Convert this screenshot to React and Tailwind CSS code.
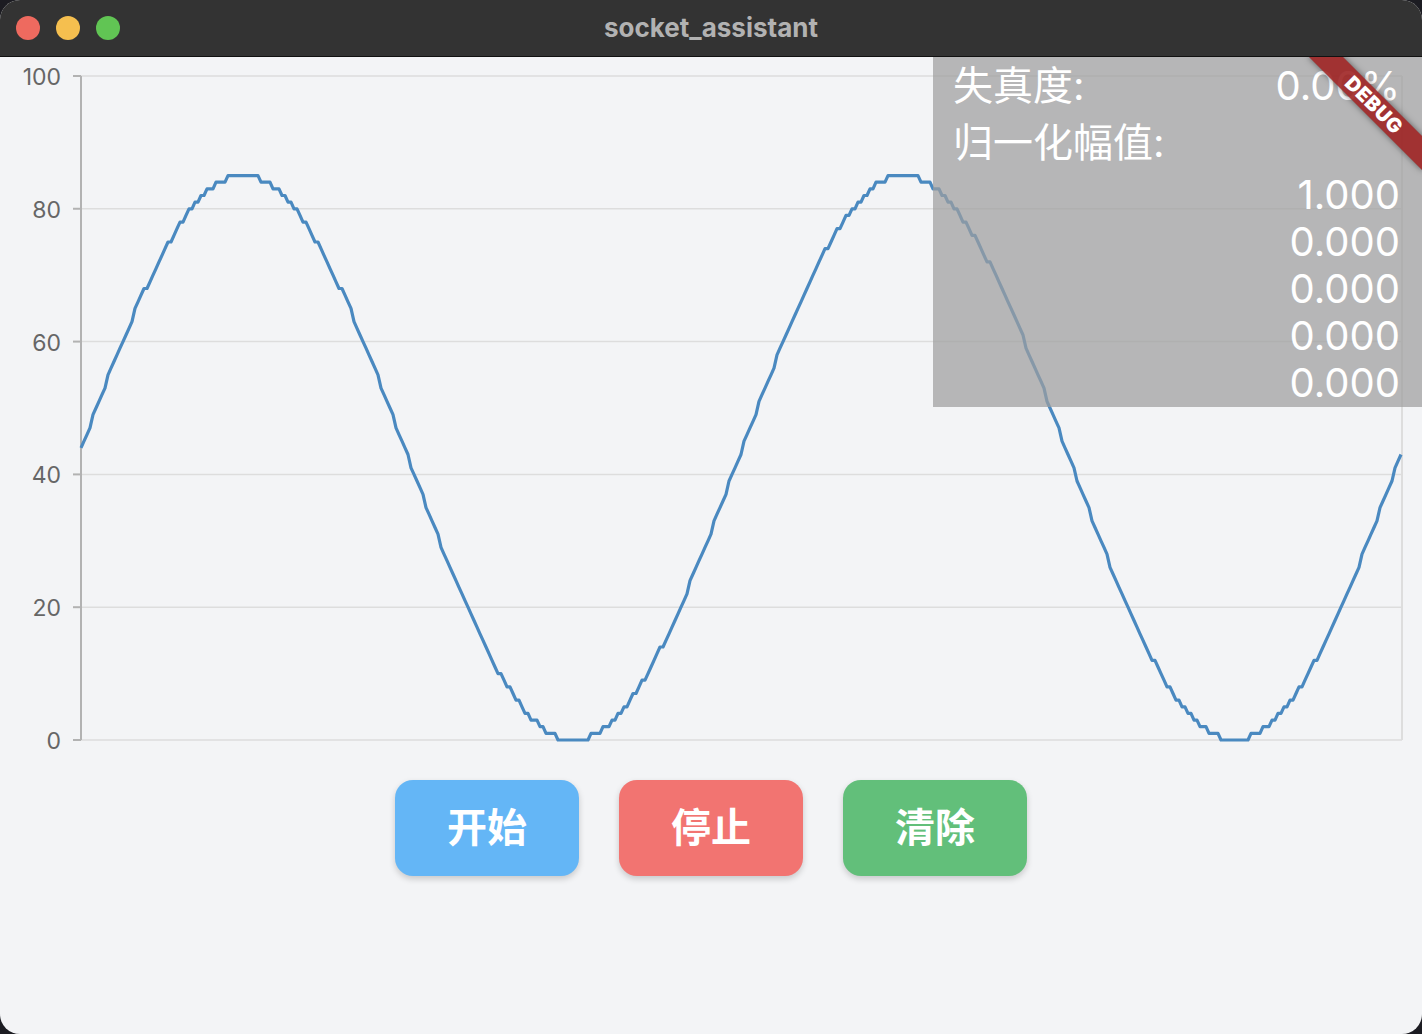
import React from "react";

const FONT = { fontFamily: 'Inter, "Noto Sans CJK SC", sans-serif' };

// chart geometry (content-area coordinates)
const LEFT = 81;
const RIGHT = 1402;
const TOP = 19;
const BOTTOM = 683;
const PX_PER_UNIT = (BOTTOM - TOP) / 100;

function buildWave() {
  const pts = [];
  for (let x = LEFT; x <= RIGHT; x += 3) {
    const v = Math.round(42.5 + 42.5 * Math.cos((2 * Math.PI * (x - 243)) / 661));
    const y = TOP + (100 - v) * PX_PER_UNIT;
    pts.push(`${x},${y.toFixed(1)}`);
  }
  return pts.join(" ");
}

function WaveChart() {
  const ticks = [0, 20, 40, 60, 80, 100];
  return (
    <svg width="1422" height="703" className="block">
      {ticks.map((t) => {
        const y = TOP + (100 - t) * PX_PER_UNIT;
        return (
          <g key={t}>
            <line x1={LEFT} x2={RIGHT} y1={y} y2={y} stroke="#dddddd" strokeWidth="1.5" />
            <line x1={73} x2={LEFT} y1={y} y2={y} stroke="#b2b2b2" strokeWidth="2" />
            <text
              x="61"
              y={y + 1}
              textAnchor="end"
              dominantBaseline="central"
              fill="#666666"
              fontSize="23"
              style={FONT}
            >
              {t}
            </text>
          </g>
        );
      })}
      <line x1={RIGHT} x2={RIGHT} y1={TOP} y2={BOTTOM} stroke="#dddddd" strokeWidth="2" />
      <line x1={LEFT} x2={LEFT} y1={TOP} y2={BOTTOM} stroke="#b2b2b2" strokeWidth="2" />
      <polyline
        points={buildWave()}
        fill="none"
        stroke="#4a89c0"
        strokeWidth="3.2"
        strokeLinejoin="round"
      />
    </svg>
  );
}

function App() {
  const buttons = [
    { label: "开始", cls: "bg-[#64b6f6]" },
    { label: "停止", cls: "bg-[#f27471]" },
    { label: "清除", cls: "bg-[#62bf7a]" },
  ];
  const values = ["1.000", "0.000", "0.000", "0.000", "0.000"];

  return (
    <div className="w-[1422px] h-[1034px] bg-[#1c1c22]" style={FONT}>
      <div className="w-full h-full rounded-[20px] overflow-hidden flex flex-col bg-[#f3f4f6]">
        {/* title bar */}
        <div className="relative h-[57px] shrink-0 bg-[#333333] border-b border-[#111111] flex items-center px-[16px] gap-[16px]">
          <div className="w-[24px] h-[24px] rounded-full bg-[#ee6a5f]" />
          <div className="w-[24px] h-[24px] rounded-full bg-[#f5bf4f]" />
          <div className="w-[24px] h-[24px] rounded-full bg-[#61c554]" />
          <div className="absolute inset-0 flex items-center justify-center pointer-events-none">
            <span className="text-[26px] font-bold text-[#b2b2b2] -mt-[2px]">socket_assistant</span>
          </div>
        </div>

        {/* content */}
        <div className="relative flex-1 overflow-hidden">
          <WaveChart />

          <div className="flex justify-center gap-[40px] mt-[20px]">
            {buttons.map((b) => (
              <button
                key={b.label}
                className={`w-[184px] h-[96px] rounded-[18px] text-white font-bold text-[40px] shadow-[0_3px_6px_rgba(0,0,0,0.18)] ${b.cls}`}
              >
                {b.label}
              </button>
            ))}
          </div>

          {/* stats overlay */}
          <div className="absolute top-0 right-0 w-[489px] h-[350px] bg-[rgba(158,158,158,0.72)] pl-[20px] pr-[22px] text-white text-[40px]">
            <div className="h-[57px] flex items-center justify-between">
              <span>失真度:</span>
              <span>0.00%</span>
            </div>
            <div className="h-[57px] flex items-center">
              <span>归一化幅值:</span>
            </div>
            {values.map((v, i) => (
              <div key={i} className="h-[47px] leading-[47px] text-right">
                {v}
              </div>
            ))}
          </div>

          {/* debug banner */}
          <div className="absolute top-[36px] right-[-32px] w-[160px] h-[24px] rotate-45 bg-[rgba(158,36,36,0.9)] shadow-[0_0_6px_rgba(0,0,0,0.5)] flex items-center justify-center">
            <span className="text-white text-[20px] font-black leading-none tracking-[0.5px]">DEBUG</span>
          </div>
        </div>
      </div>
    </div>
  );
}

export default App;
